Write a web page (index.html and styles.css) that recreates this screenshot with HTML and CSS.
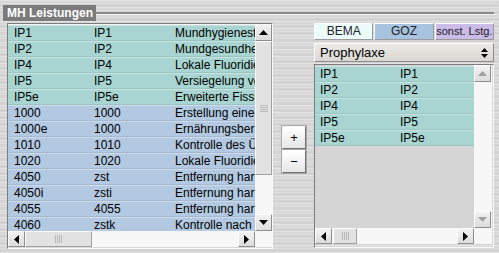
FILE: index.html
```html
<!DOCTYPE html>
<html lang="de">
<head>
  <meta charset="UTF-8">
  <title>MH Leistungen</title>
  <link rel="stylesheet" href="styles.css">
</head>
<body>
  <div class="window">
    <div class="title-row">
      <span class="title">MH Leistungen</span>
      <span class="rule"></span>
    </div>
    <div class="main">
      <!-- Leistungskatalog links -->
      <div class="listbox catalog">
        <div class="rows">
          <div class="row ip"><span class="c1">IP1</span><span class="c2">IP1</span><span class="c3">Mundhygienestatus</span></div>
          <div class="row ip"><span class="c1">IP2</span><span class="c2">IP2</span><span class="c3">Mundgesundheitsaufklärung</span></div>
          <div class="row ip"><span class="c1">IP4</span><span class="c2">IP4</span><span class="c3">Lokale Fluoridierung</span></div>
          <div class="row ip"><span class="c1">IP5</span><span class="c2">IP5</span><span class="c3">Versiegelung von Fissuren</span></div>
          <div class="row ip"><span class="c1">IP5e</span><span class="c2">IP5e</span><span class="c3">Erweiterte Fissurenversiegelung</span></div>
          <div class="row goz"><span class="c1">1000</span><span class="c2">1000</span><span class="c3">Erstellung eines Mundhygieneplans</span></div>
          <div class="row goz"><span class="c1">1000e</span><span class="c2">1000</span><span class="c3">Ernährungsberatung</span></div>
          <div class="row goz"><span class="c1">1010</span><span class="c2">1010</span><span class="c3">Kontrolle des Übungserfolges</span></div>
          <div class="row goz"><span class="c1">1020</span><span class="c2">1020</span><span class="c3">Lokale Fluoridierung</span></div>
          <div class="row goz"><span class="c1">4050</span><span class="c2">zst</span><span class="c3">Entfernung harter Beläge</span></div>
          <div class="row goz"><span class="c1">4050i</span><span class="c2">zsti</span><span class="c3">Entfernung harter Beläge</span></div>
          <div class="row goz"><span class="c1">4055</span><span class="c2">4055</span><span class="c3">Entfernung harter Beläge</span></div>
          <div class="row goz"><span class="c1">4060</span><span class="c2">zstk</span><span class="c3">Kontrolle nach Entfernung</span></div>
        </div>
        <div class="vscroll">
          <div class="sbtn"><svg width="9" height="5" viewBox="0 0 9 5"><polygon points="0,5 9,5 4.5,0" fill="#000"/></svg></div>
          <div class="vthumb"><span class="grip-h"></span></div>
          <div class="track"></div>
          <div class="sbtn"><svg width="9" height="5" viewBox="0 0 9 5"><polygon points="0,0 9,0 4.5,5" fill="#000"/></svg></div>
        </div>
        <div class="hscroll">
          <div class="sbtn"><svg width="5" height="9" viewBox="0 0 5 9"><polygon points="5,0 5,9 0,4.5" fill="#000"/></svg></div>
          <div class="hthumb wide"><span class="grip-v"></span></div>
          <div class="track"></div>
          <div class="sbtn"><svg width="5" height="9" viewBox="0 0 5 9"><polygon points="0,0 0,9 5,4.5" fill="#000"/></svg></div>
        </div>
        <div class="corner"></div>
      </div>

      <div class="mover">
        <button class="mbtn">+</button>
        <button class="mbtn">&minus;</button>
      </div>

      <!-- Auswahl rechts -->
      <div class="side">
        <div class="tabs">
          <span class="tab bema">BEMA</span>
          <span class="tab goz-tab">GOZ</span>
          <span class="tab sonst">sonst. Lstg.</span>
        </div>
        <div class="select">
          <span>Prophylaxe</span>
          <svg width="7" height="10" viewBox="0 0 7 10"><polygon points="0,4 7,4 3.5,0" fill="#000"/><polygon points="0,6 7,6 3.5,10" fill="#000"/></svg>
        </div>
        <div class="listbox chosen">
          <div class="rows">
            <div class="row ip"><span class="c1">IP1</span><span class="c2">IP1</span></div>
            <div class="row ip"><span class="c1">IP2</span><span class="c2">IP2</span></div>
            <div class="row ip"><span class="c1">IP4</span><span class="c2">IP4</span></div>
            <div class="row ip"><span class="c1">IP5</span><span class="c2">IP5</span></div>
            <div class="row ip"><span class="c1">IP5e</span><span class="c2">IP5e</span></div>
          </div>
          <div class="vscroll">
            <div class="sbtn"><svg width="9" height="5" viewBox="0 0 9 5"><polygon points="0,5 9,5 4.5,0" fill="#a0a0a0"/></svg></div>
            <div class="track"></div>
            <div class="sbtn"><svg width="9" height="5" viewBox="0 0 9 5"><polygon points="0,0 9,0 4.5,5" fill="#a0a0a0"/></svg></div>
          </div>
          <div class="hscroll">
            <div class="sbtn"><svg width="5" height="9" viewBox="0 0 5 9"><polygon points="5,0 5,9 0,4.5" fill="#000"/></svg></div>
            <div class="hthumb narrow"><span class="grip-v"></span></div>
            <div class="track"></div>
            <div class="sbtn"><svg width="5" height="9" viewBox="0 0 5 9"><polygon points="0,0 0,9 5,4.5" fill="#000"/></svg></div>
          </div>
          <div class="corner"></div>
        </div>
      </div>
    </div>
  </div>
</body>
</html>
```

FILE: styles.css
```css
body {
  margin: 0;
  font-family: 'Liberation Sans', Arial, sans-serif;
  font-size: 12px;
  color: #000;
}
.window {
  width: 499px;
  height: 253px;
  box-sizing: border-box;
  padding: 5px 5px 0 3px;
  background-color: #dbdbdb;
  background-image: repeating-linear-gradient(180deg,
    rgba(255,255,255,0.25) 0 1px,
    rgba(0,0,0,0.02) 1px 3px,
    rgba(255,255,255,0.12) 3px 4px,
    rgba(0,0,0,0.04) 4px 7px);
}
.title-row {
  display: flex;
  align-items: center;
  height: 16px;
}
.title {
  background: #7b7b7b;
  color: #fff;
  font-weight: bold;
  font-size: 12px;
  line-height: 16px;
  padding: 0 3px 0 4px;
}
.rule {
  flex: 1;
  height: 2px;
  background: #8a8a8a;
  border-bottom: 1px solid #f0f0f0;
}
.main {
  display: flex;
  margin-top: 2px;
}
.listbox {
  display: grid;
  border: 1px solid #7c7c7c;
  border-right-color: #fafafa;
  border-bottom-color: #fafafa;
  box-sizing: border-box;
  overflow: hidden;
}
.catalog {
  margin-left: 4px;
  width: 267px;
  height: 226px;
  grid-template-columns: 247px 17px;
  grid-template-rows: 207px 16px;
}
.chosen {
  width: 180px;
  height: 184px;
  margin-top: 2px;
  grid-template-columns: 159px 18px;
  grid-template-rows: 163px 16px;
}
.rows {
  overflow: hidden;
  padding-top: 1px;
}
.chosen .rows {
  background: #d5d5d5;
}
.catalog .rows {
  background: #f4f4f4;
}
.row {
  display: flex;
  height: 16px;
  line-height: 15px;
  box-sizing: border-box;
  border-bottom: 1px solid rgba(0,0,0,0.08);
  border-top: 1px solid rgba(255,255,255,0.35);
  white-space: nowrap;
  overflow: hidden;
}
.ip { background: #a8d5d1; }
.goz { background: #b2c9e1; }
.c1 { width: 80px; padding-left: 6px; flex: none; }
.c2 { width: 81px; flex: none; }
.c3 { flex: none; }
.chosen .c1 { padding-left: 5px; }
.vscroll {
  display: flex;
  flex-direction: column;
  background: #f7f7f7;
}
.hscroll {
  display: flex;
  background: #f7f7f7;
}
.corner {
  background: #f7f7f7;
}
.track { flex: 1; }
.sbtn {
  flex: none;
  width: 17px;
  height: 16px;
  box-sizing: border-box;
  display: flex;
  align-items: center;
  justify-content: center;
  background: linear-gradient(#f2f2f2, #dcdcdc);
  border: 1px solid #fdfdfd;
  border-right-color: #8e8e8e;
  border-bottom-color: #8e8e8e;
}
.vscroll .sbtn { width: 17px; height: 17px; }
.vthumb {
  height: 134px;
  box-sizing: border-box;
  background: #e2e2e2;
  border: 1px solid #fdfdfd;
  border-right-color: #a0a0a0;
  border-bottom-color: #a0a0a0;
  display: flex;
  align-items: center;
  justify-content: center;
}
.hthumb {
  box-sizing: border-box;
  background: #e2e2e2;
  border: 1px solid #fdfdfd;
  border-right-color: #a0a0a0;
  border-bottom-color: #a0a0a0;
  display: flex;
  align-items: center;
  justify-content: center;
}
.hthumb.wide { width: 67px; }
.hthumb.narrow { width: 24px; margin-left: 1px; }
.grip-h {
  width: 8px;
  height: 7px;
  background: repeating-linear-gradient(180deg, #b8b8b8 0 1px, transparent 1px 2px);
}
.grip-v {
  width: 7px;
  height: 8px;
  background: repeating-linear-gradient(90deg, #b8b8b8 0 1px, transparent 1px 2px);
}
.mover {
  display: flex;
  flex-direction: column;
  gap: 1px;
  margin: 103px 0 0 9px;
}
.mbtn {
  width: 24px;
  height: 23px;
  padding: 0;
  font-family: inherit;
  font-size: 13px;
  background: linear-gradient(#ffffff, #e6e6e6);
  border: 1px solid #f8f8f8;
  border-right-color: #707070;
  border-bottom-color: #707070;
  outline: 1px solid #a8a8a8;
}
.side {
  margin-left: 8px;
  width: 180px;
}
.tabs {
  display: flex;
  gap: 1px;
  height: 17px;
}
.tab {
  flex: 1;
  text-align: center;
  line-height: 15px;
  box-sizing: border-box;
  border: 1px solid #fdfdfd;
  border-right-color: #9a9a9a;
  border-bottom-color: #9a9a9a;
  color: #222;
}
.bema { background: #ebfcfb; }
.goz-tab { background: #a7c3df; }
.sonst { background: #cbbbe9; font-size: 11px; }
.select {
  margin-top: 3px;
  height: 19px;
  box-sizing: border-box;
  display: flex;
  align-items: center;
  justify-content: space-between;
  padding: 0 5px 0 5px;
  font-size: 13px;
  background: linear-gradient(#ebe9e5, #dbd8d3);
  border: 1px solid #fdfdfd;
  border-right-color: #8a8a8a;
  border-bottom-color: #8a8a8a;
}
```
